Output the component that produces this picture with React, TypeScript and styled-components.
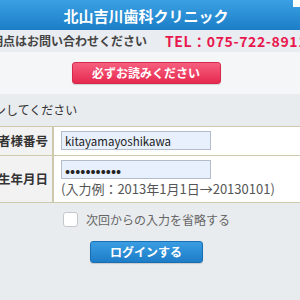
import React from "react";
import styled, { createGlobalStyle } from "styled-components";

const GlobalStyle = createGlobalStyle`
  html, body {
    margin: 0;
    padding: 0;
    background: #e9ecef;
  }
  body {
    font-family: "Noto Sans CJK JP", "Noto Sans", sans-serif;
    font-size: 12px;
    color: #333;
  }
`;

const Page = styled.div`
  position: relative;
  width: 300px;
  height: 300px;
  overflow: hidden;
  background: #e9ecef;
`;

const Corner = styled.div`
  position: absolute;
  top: 0;
  right: 0;
  width: 7px;
  height: 7px;
  background: #fff;
`;

const Header = styled.header`
  height: 30px;
  display: flex;
  align-items: center;
  justify-content: center;
  padding-right: 8px;
  background: linear-gradient(#3ba0e3, #1b7ec7);
  color: #fff;
  font-size: 15px;
  font-weight: bold;
  line-height: 1;
`;

const InfoBand = styled.div`
  height: 22px;
  display: flex;
  align-items: center;
  gap: 18px;
  margin-left: -33px;
  white-space: nowrap;
  background: #e9ecf0;
  font-weight: bold;
  line-height: 1;
`;

const InfoText = styled.span`
  color: #444;
`;

const Tel = styled.span`
  color: #e8174e;
  font-size: 14px;
  letter-spacing: 0.6px;
`;

const NoticeArea = styled.div`
  height: 42px;
  display: flex;
  align-items: center;
  justify-content: center;
  padding-right: 8px;
  background: #f4f6f8;
`;

const Button = styled.button<{ $tone: "red" | "blue" }>`
  height: 22px;
  padding: 0;
  border-radius: 3px;
  border: 1px solid ${(p) => (p.$tone === "red" ? "#d62a4d" : "#1a6fb3")};
  background: ${(p) =>
    p.$tone === "red"
      ? "linear-gradient(#f6607f, #e6294f)"
      : "linear-gradient(#3a9de2, #1d7dc7)"};
  color: #fff;
  font-family: inherit;
  font-size: 12px;
  font-weight: bold;
  line-height: 1;
  box-shadow: 0 1px 1px rgba(0, 0, 0, 0.15);
`;

const Heading = styled.div`
  height: 32px;
  display: flex;
  align-items: center;
  margin-left: -42px;
  white-space: nowrap;
  font-size: 12px;
  color: #333;
  line-height: 1;
`;

const Table = styled.div`
  display: grid;
  grid-template-columns: 114px 1fr;
  margin-left: -60px;
  width: 360px;
  border-top: 1px solid #cdc9ad;
  border-bottom: 1px solid #cdc9ad;
  background: #fff;
`;

const Label = styled.div<{ $last?: boolean }>`
  display: flex;
  align-items: center;
  justify-content: flex-end;
  padding-right: 4px;
  background: #f2f2f2;
  border-right: 2px solid #cdc9ad;
  border-bottom: ${(p) => (p.$last ? "none" : "1px solid #cdc9ad")};
  font-size: 12.5px;
  font-weight: bold;
  white-space: nowrap;
  line-height: 1;
`;

const Cell = styled.div<{ $last?: boolean }>`
  display: flex;
  flex-direction: column;
  gap: 2px;
  padding: 4px 0 ${(p) => (p.$last ? "5px" : "5px")} 7px;
  border-bottom: ${(p) => (p.$last ? "none" : "1px solid #cdc9ad")};
`;

const Input = styled.input<{ $secret?: boolean }>`
  box-sizing: border-box;
  width: 150px;
  height: 19px;
  padding: 0 3px;
  border: 1px solid #b4bccb;
  background: #e8f0fe;
  font-family: "Noto Sans CJK JP", sans-serif;
  font-size: ${(p) => (p.$secret ? "15px" : "11.5px")};
  color: #222;
  outline: none;
`;

const Hint = styled.div`
  color: #555;
  font-size: 13px;
  line-height: 16px;
  white-space: nowrap;
`;

const CheckRow = styled.label`
  display: flex;
  align-items: center;
  gap: 8px;
  padding: 9px 0 0 63px;
  color: #666;
  line-height: 1;
`;

const CheckBox = styled.span`
  box-sizing: border-box;
  width: 15px;
  height: 15px;
  border: 1px solid #c4c8ce;
  border-radius: 3px;
  background: #fff;
`;

const LoginArea = styled.div`
  display: flex;
  justify-content: center;
  padding: 14px 8px 0 0;
`;

export default function App() {
  return (
    <Page>
      <GlobalStyle />
      <Corner />
      <Header>北山吉川歯科クリニック</Header>
      <InfoBand>
        <InfoText>ご不明点はお問い合わせください</InfoText>
        <Tel>TEL：075-722-8911</Tel>
      </InfoBand>
      <NoticeArea>
        <Button $tone="red" style={{ width: 149 }}>
          必ずお読みください
        </Button>
      </NoticeArea>
      <Heading>ログインしてください</Heading>
      <Table>
        <Label>患者様番号</Label>
        <Cell>
          <Input defaultValue="kitayamayoshikawa" />
        </Cell>
        <Label $last>生年月日</Label>
        <Cell $last>
          <Input $secret type="password" defaultValue="20130101abc" />
          <Hint>(入力例：2013年1月1日→20130101)</Hint>
        </Cell>
      </Table>
      <CheckRow>
        <CheckBox />
        次回からの入力を省略する
      </CheckRow>
      <LoginArea>
        <Button $tone="blue" style={{ width: 113 }}>
          ログインする
        </Button>
      </LoginArea>
    </Page>
  );
}
